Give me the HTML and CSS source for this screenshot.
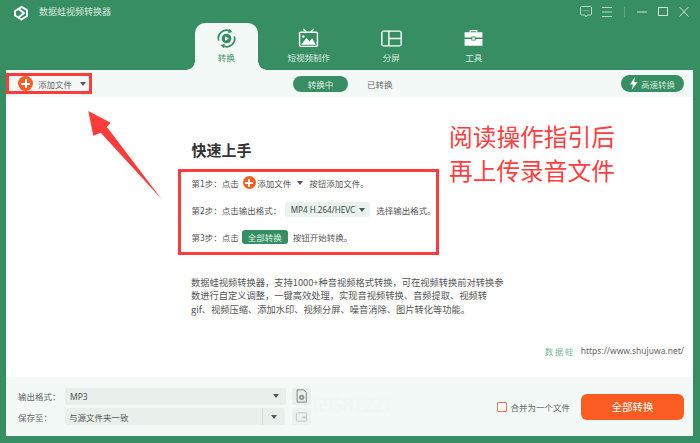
FILE: index.html
```html
<!DOCTYPE html>
<html lang="zh-CN">
<head>
<meta charset="utf-8">
<title>数据蛙视频转换器</title>
<link rel="stylesheet" href="styles.css">
</head>
<body>
<div class="app">
  <header class="header">
    <div class="titlebar">
      <div class="brand">
        <svg class="logo" viewBox="0 0 16 16"><g fill="none" stroke="#fff" stroke-width="2" stroke-linejoin="round" stroke-linecap="round"><path d="M5.500 4 8.500 1.800 14 5V11L8.500 14.500 5.500 12.500 2 10.500V6Z"/><path d="M5.500 4 11 8 5.500 12.500"/></g></svg>
        <span class="app-name">数据蛙视频转换器</span>
      </div>
      <div class="win-controls">
        <svg class="wc" viewBox="0 0 14 14"><path d="M2.500 1.500H11.500Q12.500 1.500 12.500 2.500V9Q12.500 10 11.500 10H8.500L7 12 6 10H2.500Q1.500 10 1.500 9V2.500Q1.500 1.500 2.500 1.500Z" fill="none" stroke="#b5d6c5"/><path d="M4.500 5.800h1M6.500 5.800h1M8.500 5.800h1" stroke="#b5d6c5"/></svg>
        <svg class="wc" viewBox="0 0 14 14"><path d="M2 2.500H12M2 7H12M2 11.500H12" stroke="#b5d6c5"/></svg>
        <span class="wc-sep"></span>
        <svg class="wc" viewBox="0 0 14 14"><path d="M2 7H12" stroke="#cfe4d9"/></svg>
        <svg class="wc" viewBox="0 0 14 14"><rect x="2.500" y="2.500" width="9" height="8" fill="none" stroke="#cfe4d9"/></svg>
        <svg class="wc" viewBox="0 0 14 14"><path d="M2.500 2L11.500 11.500M11.500 2L2.500 11.500" stroke="#cfe4d9"/></svg>
      </div>
    </div>
    <nav class="tabs">
      <div class="tab tab-active">
        <svg class="tab-icon" viewBox="0 0 20 20"><path d="M2.500 12A7.800 7.800 0 0 1 13.500 3M17.500 8A7.800 7.800 0 0 1 6.500 17" fill="none" stroke="#388e63" stroke-width="1.600"/><path d="M12.500 0.800 15.500 3.800 11.500 5ZM7.500 19.200 4.500 16.200 8.500 15Z" fill="#388e63"/><circle cx="10" cy="10" r="4.600" fill="#388e63"/><path d="M8.600 7.800 12.400 10 8.600 12.200Z" fill="#fff"/></svg>
        <span>转换</span>
      </div>
      <div class="tab">
        <svg class="tab-icon" viewBox="0 0 20 20"><path d="M5 1 8 4M15 1 12 4" stroke="#fff" stroke-width="1.200"/><rect x="1.500" y="4" width="17" height="13.500" rx="1" fill="none" stroke="#fff" stroke-width="1.400"/><path d="M3 16 8 9.500 11 12.500 13.500 10 17 16Z" fill="#fff"/><circle cx="5" cy="8" r="1.200" fill="#fff"/></svg>
        <span>短视频制作</span>
      </div>
      <div class="tab">
        <svg class="tab-icon" viewBox="0 0 20 20"><rect x="0.800" y="3" width="18.400" height="14" rx="1.500" fill="none" stroke="#fff" stroke-width="1.300"/><path d="M7.500 3V17M7.500 10H19" stroke="#fff" stroke-width="1.300"/></svg>
        <span>分屏</span>
      </div>
      <div class="tab">
        <svg class="tab-icon" viewBox="0 0 20 20"><path d="M7 4V2.500H13V4" fill="none" stroke="#fff" stroke-width="1.400"/><path d="M1.500 4H18.500V9H12V8H8V9H1.500Z" fill="#fff"/><path d="M1.500 10.500H8V12H12V10.500H18.500V17H1.500Z" fill="#fff"/><rect x="8.800" y="9" width="2.400" height="2.200" fill="#fff"/></svg>
        <span>工具</span>
      </div>
    </nav>
  </header>

  <main class="main">
    <div class="toolbar">
      <div class="add-file">
        <span class="plus plus-lg"></span>
        <span class="add-label">添加文件</span>
        <span class="caret caret-add"></span>
      </div>
      <div class="segments">
        <span class="seg seg-on">转换中</span>
        <span class="seg">已转换</span>
      </div>
      <div class="speed">
        <svg class="bolt" viewBox="0 0 10 14"><path d="M6.500 0 1 8H4.500L3 14 9.500 5.500H5.800Z" fill="#fff"/></svg>
        <span>高速转换</span>
      </div>
    </div>

    <section class="content">
      <h1 class="guide-title">快速上手</h1>
      <div class="steps">
        <div class="step">
          <span>第1步：点击</span>
          <span class="plus plus-sm"></span>
          <span class="step-add">添加文件</span>
          <span class="caret caret-step"></span>
          <span>按钮添加文件。</span>
        </div>
        <div class="step">
          <span>第2步：点击输出格式：</span>
          <span class="format-chip">MP4 H.264/HEVC<span class="caret caret-chip"></span></span>
          <span>选择输出格式。</span>
        </div>
        <div class="step">
          <span>第3步：点击</span>
          <span class="convert-chip">全部转换</span>
          <span>按钮开始转换。</span>
        </div>
      </div>
      <p class="intro">数据蛙视频转换器，支持1000+种音视频格式转换，可在视频转换前对转换参<br>数进行自定义调整，一键高效处理，实现音视频转换、音频提取、视频转<br>gif、视频压缩、添加水印、视频分屏、噪音消除、图片转化等功能。</p>
      <div class="site"><span class="site-brand">数据蛙</span><span>https://www.shujuwa.net/</span></div>
    </section>

    <footer class="footer">
      <div class="fields">
        <div class="field">
          <span class="field-label">输出格式：</span>
          <div class="select select-wide"><span>MP3</span><span class="caret caret-sel"></span></div>
          <span class="icon-btn">
            <svg class="file-icon" viewBox="0 0 14 16"><path d="M2 1H9.500L12.500 4V15H2Z" fill="none" stroke="#777"/><circle cx="7.200" cy="9.500" r="3" fill="#8b9490"/><circle cx="7.200" cy="9.500" r="1" fill="#e6eeea"/></svg>
          </span>
        </div>
        <div class="field">
          <span class="field-label">保存至：</span>
          <div class="select select-split"><span class="select-text">与源文件夹一致</span><span class="select-arrow"><span class="caret caret-sel"></span></span></div>
          <span class="icon-btn icon-btn-off">
            <svg class="file-icon" viewBox="0 0 14 14"><path d="M1.500 3.500Q1.500 2.500 2.500 2.500H11.500Q12.500 2.500 12.500 3.500V10.500Q12.500 11.500 11.500 11.500H2.500Q1.500 11.500 1.500 10.500Z" fill="none" stroke="#b9c9c1"/><path d="M8 6.500H12.500V8.500H8Z" fill="#b9c9c1"/></svg>
          </span>
        </div>
      </div>
      <label class="merge"><span class="checkbox"></span><span>合并为一个文件</span></label>
      <button class="convert-all">全部转换</button>
    </footer>
  </main>

  <div class="mark mark-box-add"></div>
  <div class="mark mark-box-steps"></div>
  <svg class="mark-arrow" viewBox="0 0 78 92"><path d="M2.300 2 24.700 13.700 20.700 17.700 75.700 90.300 14.700 23.700 7.300 26.700Z" fill="#ff3b3b"/></svg>
  <div class="mark-note">阅读操作指引后<br>再上传录音文件</div>
  <div class="ghost">69581221</div>
</div>
</body>
</html>
```

FILE: styles.css
```css
* { box-sizing: border-box; }
html, body { margin: 0; padding: 0; }
body {
  width: 700px;
  height: 443px;
  overflow: hidden;
  font-family: "Noto Sans CJK SC", "Noto Sans", sans-serif;
  color: #555;
}
.app {
  position: relative;
  width: 700px;
  height: 443px;
  background: #388e63;
  display: flex;
  flex-direction: column;
}

/* header */
.header { height: 70px; flex: none; display: flex; flex-direction: column; }
.titlebar {
  height: 23px;
  flex: none;
  display: flex;
  justify-content: space-between;
  align-items: center;
  padding: 0 9px 0 13px;
}
.brand { display: flex; align-items: center; gap: 10px; }
.logo { width: 16px; height: 16px; margin-top: 3px; }
.app-name { font-size: 9px; color: #d5e8de; }
.win-controls { display: flex; align-items: center; }
.wc { width: 14px; height: 14px; margin-left: 7px; }
.wc-sep { width: 1px; height: 10px; background: #5fa683; margin: 0 3px 0 10px; }

.tabs { display: flex; height: 47px; padding-left: 185px; }
.tab {
  width: 82.500px;
  display: flex;
  flex-direction: column;
  align-items: center;
  padding-top: 5px;
  color: #d9ebe2;
  font-size: 8.500px;
  line-height: 13px;
  position: relative;
}
.tab-icon { width: 21px; height: 21px; margin-bottom: 2px; }
.tab-active {
  width: 63px;
  margin: 0 9.750px;
  background: #f3f9f7;
  color: #388e63;
  border-radius: 10px 10px 0 0;
}
.tab-active::before, .tab-active::after {
  content: "";
  position: absolute;
  bottom: 0;
  width: 9px;
  height: 9px;
}
.tab-active::before {
  left: -9px;
  background: radial-gradient(circle at 0 0, #388e63 8.500px, #f3f9f7 9px);
}
.tab-active::after {
  right: -9px;
  background: radial-gradient(circle at 100% 0, #388e63 8.500px, #f3f9f7 9px);
}

/* main panel */
.main {
  flex: none;
  height: 366px;
  margin: 0 7px 0 6px;
  background: #fff;
  display: flex;
  flex-direction: column;
}
.toolbar {
  height: 27px;
  flex: none;
  background: #f3f9f7;
  display: flex;
  align-items: center;
  padding: 0 9px 0 12px;
  position: relative;
}
.add-file { display: flex; align-items: center; width: 200px; }
.plus {
  display: inline-block;
  border-radius: 50%;
  flex: none;
  background:
    linear-gradient(#fff, #fff) center / 60% 2px no-repeat,
    linear-gradient(#fff, #fff) center / 2px 60% no-repeat,
    #fb5c22;
}
.plus-lg { width: 15px; height: 15px; }
.plus-sm { width: 13px; height: 13px; margin: 0 1.500px 0 4px; }
.add-label { font-size: 8.500px; margin-left: 5px; color: #666; }
.caret {
  display: inline-block;
  width: 0;
  height: 0;
  border-left: 3.500px solid transparent;
  border-right: 3.500px solid transparent;
  border-top: 4px solid #555;
  flex: none;
}
.caret-add { margin-left: 8px; }
.segments {
  display: flex;
  align-items: center;
  gap: 19px;
  margin-left: 75px;
  font-size: 8.500px;
  color: #666;
}
.seg { line-height: 16px; }
.seg-on {
  background: #388e63;
  color: #e3f1ea;
  width: 55px;
  height: 16px;
  border-radius: 8px;
  text-align: center;
}
.speed {
  margin-left: auto;
  width: 63px;
  height: 17px;
  border-radius: 9px;
  background: #388e63;
  color: #cfe4d9;
  font-size: 8.500px;
  display: flex;
  align-items: center;
  padding-left: 8px;
  gap: 3px;
}
.bolt { width: 9px; height: 13px; }

/* guide */
.content { flex: 1; min-height: 0; padding: 41px 0 0 185.500px; position: relative; }
.guide-title {
  margin: 0;
  font-size: 15px;
  line-height: 24px;
  font-weight: 700;
  color: #333;
}
.steps {
  margin-top: 12.500px;
  display: flex;
  flex-direction: column;
  gap: 11px;
  font-size: 8.500px;
  color: #555;
}
.step { display: flex; align-items: center; height: 16px; white-space: nowrap; }
.step-add { margin-right: 6px; }
.caret-step { margin-right: 6px; border-left-width: 3px; border-right-width: 3px; }
.format-chip {
  display: flex;
  align-items: center;
  height: 15px;
  padding: 0 5px 0 6px;
  margin: 0 6px 0 3.500px;
  background: #e9f4ef;
  border-radius: 2px;
  font-family: "Noto Sans", sans-serif;
  font-size: 8.100px;
  color: #444;
}
.caret-chip { margin-left: 4px; border-left-width: 3px; border-right-width: 3px; }
.convert-chip {
  height: 14px;
  line-height: 14px;
  width: 46px;
  margin: 0 5px 0 3px;
  text-align: center;
  background: #388e63;
  color: #dff0e7;
  border-radius: 3px;
}
.intro {
  margin: 31.500px 0 0 -0.500px;
  font-size: 9.250px;
  line-height: 13.400px;
  color: #555;
  white-space: nowrap;
}
.site {
  position: absolute;
  right: 9px;
  bottom: 20px;
  display: flex;
  gap: 6px;
  align-items: center;
  font-family: "Noto Sans", sans-serif;
  font-size: 8.500px;
  line-height: 12px;
  color: #666;
}
.site-brand { font-family: "Noto Sans CJK SC", sans-serif; color: #79b897; letter-spacing: 1.500px; }

/* footer */
.footer {
  height: 59px;
  flex: none;
  background: #f3f9f7;
  display: flex;
  align-items: center;
  padding: 0 9px 0 12px;
}
.fields { display: flex; flex-direction: column; gap: 2.500px; }
.field { display: flex; align-items: center; height: 17.700px; }
.field-label { width: 47px; font-size: 8.500px; color: #666; }
.select {
  width: 221px;
  height: 17.700px;
  background: #e9f0ec;
  border-radius: 2px;
  display: flex;
  align-items: center;
  justify-content: space-between;
  font-size: 8.500px;
  color: #555;
  padding: 0 7px 0 5px;
}
.select-wide { font-family: "Noto Sans", sans-serif; }
.select-split { padding: 0; width: 220px; margin-right: 1px; }
.select-text { padding-left: 4px; }
.select-arrow {
  width: 23px;
  height: 100%;
  border-left: 1px solid #d3e3da;
  display: flex;
  align-items: center;
  justify-content: center;
}
.icon-btn {
  width: 19px;
  height: 17.700px;
  margin-left: 6px;
  background: #e9f0ec;
  border-radius: 2px;
  display: flex;
  align-items: center;
  justify-content: center;
}
.icon-btn-off { background: #edf3f0; }
.file-icon { width: 13px; height: 14px; }
.merge {
  margin-left: auto;
  display: flex;
  align-items: center;
  gap: 3.500px;
  font-size: 8.500px;
  color: #666;
}
.checkbox {
  width: 10px;
  height: 10px;
  border: 1.500px solid #f0764a;
  border-radius: 1px;
  background: #fff;
}
.convert-all {
  margin: 0 0 0 11px;
  width: 103px;
  height: 26px;
  border: 0;
  border-radius: 6px;
  background: #fb5c22;
  color: #fff;
  font-family: inherit;
  font-size: 10.500px;
  padding: 0;
}

/* annotations drawn over the screenshot */
.mark { position: absolute; border: 3px solid #ff3b3b; }
.mark-box-add { left: 6px; top: 73px; width: 86px; height: 21px; }
.mark-box-steps { left: 178px; top: 169px; width: 261px; height: 86px; }
.mark-arrow { position: absolute; left: 86px; top: 109px; width: 78px; height: 92px; }
.mark-note {
  position: absolute;
  left: 449px;
  top: 119px;
  font-size: 23.700px;
  line-height: 34px;
  color: #ff4040;
  white-space: nowrap;
}
.ghost {
  position: absolute;
  left: 313px;
  top: 390px;
  font-family: "Liberation Serif", serif;
  font-size: 20px;
  line-height: 30px;
  color: #f1f7f4;
}
```
